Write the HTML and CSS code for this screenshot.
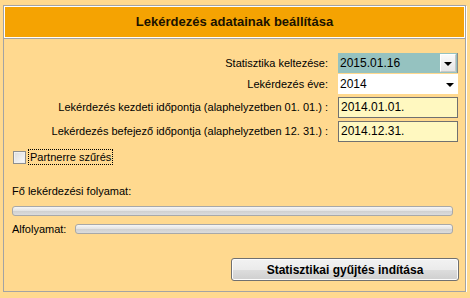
FILE: index.html
```html
<!DOCTYPE html>
<html>
<head>
    <title>Lekérdezés adatainak beállítása</title>
    <link rel="stylesheet" href="styles.css">
</head>
<body>
    <div class="panel">
        <div class="header-wrap">
            <div class="header">Lekérdezés adatainak beállítása</div>
        </div>

        <div class="content">
            <div class="form-grid">
                <div class="label">Statisztika keltezése:</div>
                <div class="combo combo-date">
                    <span class="combo-value">2015.01.16</span>
                    <span class="combo-button"><span class="arrow"></span></span>
                </div>

                <div class="label">Lekérdezés éve:</div>
                <div class="combo combo-year">
                    <span class="combo-value">2014</span>
                    <span class="combo-plain"><span class="arrow"></span></span>
                </div>

                <div class="label label-input">Lekérdezés kezdeti időpontja (alaphelyzetben 01. 01.) :</div>
                <div class="text-input first">2014.01.01.</div>

                <div class="label label-input">Lekérdezés befejező időpontja (alaphelyzetben 12. 31.) :</div>
                <div class="text-input">2014.12.31.</div>
            </div>

            <div class="check-row">
                <span class="checkbox"></span>
                <span class="check-label">Partnerre szűrés</span>
            </div>

            <div class="progress-title">Fő lekérdezési folyamat:</div>
            <div class="progress"></div>

            <div class="sub-row">
                <span class="sub-label">Alfolyamat:</span>
                <div class="progress sub"></div>
            </div>

            <div class="actions">
                <button class="button">Statisztikai gyűjtés indítása</button>
            </div>
        </div>
    </div>
</body>
</html>
```

FILE: styles.css
```css
body {
    font-family: "Liberation Sans", Arial, sans-serif;
    font-size: 11px;
    color: #000;
    background-color: #ffd98f;
    margin: 0;
    padding: 5px 3px 0 3px;
}
.panel {
    width: 461px;
    height: 285px;
    border: 1px solid #a3a3a3;
    box-shadow: 1px 1px 0 #fff;
}
.header-wrap {
    border-bottom: 1px solid #a3a3a3;
}
.header {
    height: 30px;
    line-height: 30px;
    border: 1px solid #fff;
    background-color: #f5a302;
    text-align: center;
    font-weight: bold;
    font-size: 13px;
    color: #1a1200;
}
.content {
    padding: 14px 6px 0 8px;
}
.form-grid {
    display: grid;
    grid-template-columns: 1fr 120px;
    column-gap: 10px;
    margin-right: 1px;
}
.label {
    text-align: right;
    height: 20px;
    line-height: 20px;
    margin-bottom: 1px;
}
.label-input {
    height: 21px;
    line-height: 21px;
    margin-top: 2px;
}
.combo {
    display: flex;
    align-items: center;
    height: 20px;
    margin-bottom: 1px;
    font-size: 12px;
}
.combo-value {
    flex: 1;
    padding-left: 2px;
}
.combo-date {
    background-color: #95c2c0;
    border-right: 1px solid #8a8a8a;
    box-sizing: border-box;
}
.combo-year {
    background-color: #fff;
}
.combo-button {
    width: 16px;
    height: 18px;
    margin-right: 1px;
    background: linear-gradient(#fafafa, #e6e6e6);
    border: 1px solid #fff;
    border-right-color: #c8c8c8;
    border-bottom-color: #c8c8c8;
    box-sizing: border-box;
    display: flex;
    align-items: center;
    justify-content: center;
}
.combo-plain {
    width: 17px;
    height: 18px;
    display: flex;
    align-items: center;
    justify-content: center;
}
.arrow {
    width: 0;
    height: 0;
    border-left: 4px solid transparent;
    border-right: 4px solid transparent;
    border-top: 4px solid #000;
    margin-top: 1px;
}
.text-input {
    height: 21px;
    line-height: 19px;
    margin-top: 2px;
    box-sizing: border-box;
    border: 1px solid #707070;
    background-color: #fff8c0;
    padding-left: 2px;
    font-size: 12px;
}
.check-row {
    display: flex;
    align-items: center;
    margin-top: 6px;
    margin-left: 1px;
    height: 16px;
}
.checkbox {
    width: 11px;
    height: 11px;
    border: 1px solid #8e8f8f;
    background: linear-gradient(135deg, #dcdcdc, #fbfbfb);
    box-shadow: inset 0 0 0 1px #f0f0f0;
}
.check-label {
    margin-left: 2px;
    border: 1px dotted #000;
    padding: 0 1px;
    line-height: 14px;
}
.progress-title {
    margin-top: 19px;
    line-height: 14px;
}
.progress {
    height: 10px;
    margin: 8px 6px 0 0;
    box-sizing: border-box;
    border: 1px solid #a8a8a8;
    border-radius: 3px;
    background: linear-gradient(#f6f6f6, #e2e2e2 50%, #d0d0d0 51%, #dcdcdc);
}
.sub-row {
    display: flex;
    align-items: center;
    margin-top: 7px;
}
.sub-label {
    width: 63px;
}
.progress.sub {
    flex: 1;
    margin: 0 6px 0 0;
}
.actions {
    display: flex;
    justify-content: flex-end;
    margin-top: 23px;
}
.button {
    width: 228px;
    height: 23px;
    font-family: "Liberation Sans", Arial, sans-serif;
    font-size: 12px;
    font-weight: bold;
    color: #000;
    border: 1px solid #707070;
    border-radius: 3px;
    background: linear-gradient(#f2f2f2, #ebebeb 50%, #dddddd 51%, #cfcfcf);
    box-shadow: inset 0 0 0 1px #fcfcfc;
}
```
